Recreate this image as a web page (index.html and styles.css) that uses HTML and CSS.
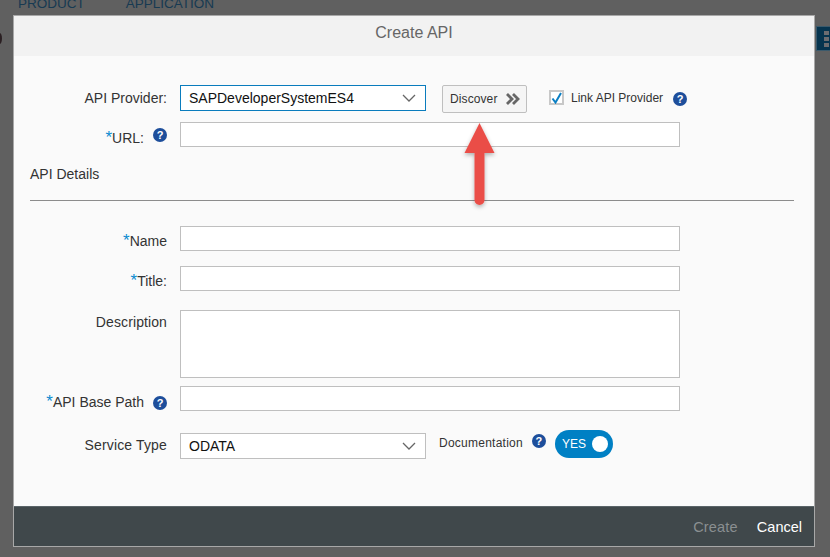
FILE: index.html
```html
<!doctype html>
<html>
<head>
    <meta charset="utf-8">
    <title>Create API</title>
    <link rel="stylesheet" href="styles.css">
</head>

<body>

<div class="page-nav">
    <span class="nav-item">PRODUCT</span>
    <span class="nav-item">APPLICATION</span>
</div>
<div class="page-dot"></div>
<div class="page-menu"><i></i><i></i><i></i></div>

<div class="dialog">
    <div class="dialog-head">Create API</div>

    <div class="dialog-body">
        <div class="row row-provider">
            <label class="label">API Provider:</label>
            <div class="select select-focus">
                <span>SAPDeveloperSystemES4</span>
                <svg class="chevron" width="14" height="8" viewBox="0 0 14 8"><path d="M1 1l6 6 6-6" fill="none" stroke="#666" stroke-width="1.3"/></svg>
            </div>
            <button class="discover">Discover
                <svg width="14" height="12" viewBox="0 0 14 12"><path d="M1 1l5 5-5 5M7 1l5 5-5 5" fill="none" stroke="#666" stroke-width="2.8"/></svg>
            </button>
            <span class="check">
                <svg width="11" height="12" viewBox="0 0 11 12"><path d="M1.5 6.5l3 4L10 1" fill="none" stroke="#0a7fc4" stroke-width="2"/></svg>
            </span>
            <span class="small-label link-label">Link API Provider</span>
            <span class="help">?</span>
        </div>

        <div class="row row-url">
            <label class="label"><b>*</b>URL:<span class="help help-label">?</span></label>
            <div class="input"></div>
        </div>

        <div class="section-title">API Details</div>
        <div class="divider"></div>

        <div class="row row-name">
            <label class="label label-tight"><b>*</b>Name</label>
            <div class="input"></div>
        </div>
        <div class="row row-title">
            <label class="label label-tight"><b>*</b>Title:</label>
            <div class="input"></div>
        </div>
        <div class="row row-desc">
            <label class="label label-wide">Description</label>
            <div class="input textarea"></div>
        </div>
        <div class="row row-path">
            <label class="label"><b>*</b>API Base Path<span class="help help-label">?</span></label>
            <div class="input"></div>
        </div>
        <div class="row row-service">
            <label class="label">Service Type</label>
            <div class="select">
                <span>ODATA</span>
                <svg class="chevron" width="14" height="8" viewBox="0 0 14 8"><path d="M1 1l6 6 6-6" fill="none" stroke="#666" stroke-width="1.3"/></svg>
            </div>
            <span class="small-label doc-label">Documentation</span>
            <span class="help help-doc">?</span>
            <span class="toggle">YES<i></i></span>
        </div>
    </div>

    <div class="dialog-foot">
        <span class="foot-btn disabled">Create</span>
        <span class="foot-btn">Cancel</span>
    </div>
</div>

<svg class="arrow" width="46" height="100" viewBox="0 0 46 100">
    <defs>
        <filter id="arrow-shadow" x="-30%" y="-10%" width="160%" height="125%">
            <feDropShadow dx="0" dy="2" stdDeviation="2" flood-color="#000" flood-opacity=".3"/>
        </filter>
    </defs>
    <path d="M22.5 5L37.5 35H27.5V82a5 5 0 0 1-10 0V35H7.5z" fill="#ea4d47" filter="url(#arrow-shadow)"/>
</svg>

</body>
</html>
```

FILE: styles.css
```css
* {
    box-sizing: border-box;
}

body {
    margin: 0;
    height: 557px;
    overflow: hidden;
    background: #606060;
    font-family: "Liberation Sans", Arial, sans-serif;
    color: #333;
}

.page-nav {
    display: flex;
    gap: 41px;
    height: 15px;
    padding-left: 18px;
    overflow: hidden;
}

.nav-item {
    font-size: 13.5px;
    line-height: 8px;
    color: #173a52;
}

.page-dot {
    position: absolute;
    left: -3px;
    top: 33px;
    width: 5px;
    height: 11px;
    border-radius: 50%;
    background: #2a1f22;
}

.page-menu {
    position: absolute;
    left: 816px;
    top: 26px;
    width: 14px;
    height: 25px;
    padding: 4px 0 0 7px;
    display: flex;
    flex-direction: column;
    gap: 2px;
    background: #06344f;
    border: 1px solid #3b5a6c;
    border-right: none;
}

.page-menu i {
    width: 5px;
    height: 4px;
    background: #6c6c70;
}

.dialog {
    position: absolute;
    left: 13px;
    top: 15px;
    width: 802px;
    height: 532px;
    display: flex;
    flex-direction: column;
    background: #fafafa;
    border: 1px solid #a8a8a8;
}

.dialog-head {
    height: 40px;
    background: #f2f2f2;
    text-align: center;
    font-size: 16px;
    line-height: 34px;
    color: #666;
}

.dialog-body {
    flex: 1;
    padding: 29px 20px 0 16px;
}

.dialog-foot {
    height: 40px;
    display: flex;
    justify-content: flex-end;
    align-items: center;
    gap: 19px;
    padding-right: 12px;
    background: #40484b;
    border-top: 1px solid #5a6468;
}

.foot-btn {
    font-size: 14.5px;
    color: #fff;
}

.foot-btn.disabled {
    color: #8a8f91;
    letter-spacing: .2px;
}

.row {
    display: flex;
    align-items: flex-start;
}

.label {
    width: 150px;
    flex: none;
    margin-right: 0;
    padding: 4px 13px 0 0;
    text-align: right;
    font-size: 14px;
    line-height: 17px;
    white-space: nowrap;
}

.label b {
    font-size: 17px;
    line-height: 10px;
    font-weight: normal;
    color: #0a8ad0;
}

.label-wide {
    letter-spacing: .1px;
}

.input {
    width: 500px;
    height: 25px;
    background: #fff;
    border: 1px solid #bfbfbf;
}

.textarea {
    height: 68px;
}

.select {
    width: 246px;
    height: 26px;
    flex: none;
    display: flex;
    justify-content: space-between;
    align-items: center;
    padding: 0 9px 0 8px;
    background: #fff;
    border: 1px solid #bfbfbf;
    font-size: 14px;
    color: #111;
}

.select-focus {
    border-color: #0a7cbd;
}

.discover {
    width: 85px;
    height: 28px;
    margin: 0 22px 0 16px;
    padding: 0 6px 0 7px;
    display: flex;
    justify-content: space-between;
    align-items: center;
    font-family: inherit;
    font-size: 12px;
    letter-spacing: .1px;
    color: #333;
    background: #f5f5f5;
    border: 1px solid #bfbfbf;
    border-radius: 2px;
}

.check {
    width: 15px;
    height: 15px;
    margin-top: 5px;
    display: flex;
    justify-content: center;
    align-items: center;
    background: #fff;
    border: 2px solid #c8c8c8;
}

.small-label {
    font-size: 12px;
    line-height: 14px;
}

.link-label {
    margin: 6px 10px 0 7px;
}

.help {
    display: inline-block;
    width: 14px;
    height: 14px;
    border-radius: 50%;
    background: #1d4e9b;
    color: #fff;
    text-align: center;
    font-size: 11px;
    font-weight: bold;
    line-height: 14px;
}

.row-provider .label {
    padding-top: 5px;
}

.row-provider .help {
    margin-top: 7px;
}

.help-label {
    margin-left: 9px;
    vertical-align: 0;
}

.row-url {
    height: 25px;
    margin-top: 9px;
}

.row-url .label {
    padding-top: 6px;
}

.row-url .help-label {
    vertical-align: 4px;
}

.section-title {
    margin-top: 19px;
    font-size: 14px;
    line-height: 17px;
}

.divider {
    height: 1px;
    margin: 17px 0 25px;
    background: #8c8c8c;
}

.row-name,
.row-title {
    height: 25px;
}

.row-title {
    margin-top: 15px;
}

.row-desc {
    margin-top: 19px;
}

.row-path {
    height: 25px;
    margin-top: 8px;
}

.row-path .label {
    padding-top: 8px;
}

.label-tight {
    padding-top: 7px;
}

.row-service {
    margin-top: 22px;
}

.row-service .label {
    padding-top: 4px;
    letter-spacing: .15px;
}

.doc-label {
    margin: 3px 9px 0 13px;
    letter-spacing: .25px;
}

.help-doc {
    margin-top: 1px;
}

.toggle {
    width: 58px;
    height: 28px;
    margin: -3px 0 0 9px;
    padding: 0 4px 0 7px;
    display: flex;
    justify-content: space-between;
    align-items: center;
    border-radius: 14px;
    background: #0080c4;
    color: #fff;
    font-size: 12px;
}

.toggle i {
    width: 16px;
    height: 16px;
    margin-right: 1px;
    border-radius: 50%;
    background: #fff;
}

.arrow {
    position: absolute;
    left: 457px;
    top: 118px;
}
```
